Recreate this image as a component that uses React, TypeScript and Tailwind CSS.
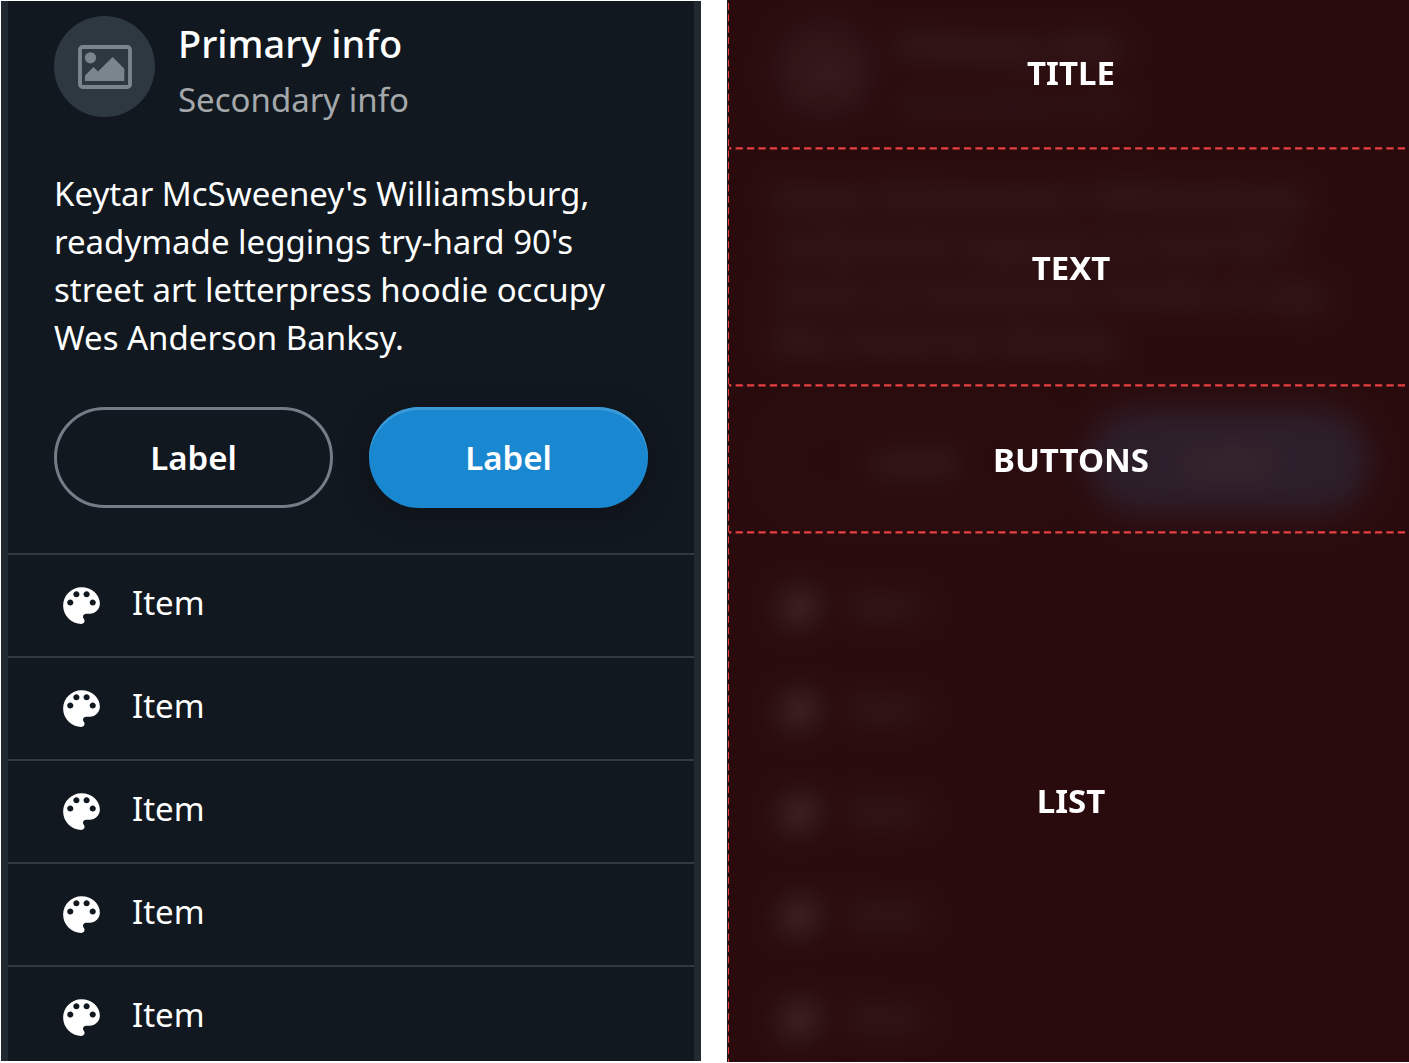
const items = [1, 2, 3, 4, 5];

function PictureIcon() {
  return (
    <svg viewBox="0 0 54 44" className="h-11 w-[54px] text-[#7a858e]" fill="currentColor" aria-hidden="true">
      <rect x="2" y="2" width="50" height="40" rx="2.5" fill="none" stroke="currentColor" strokeWidth="3.8" />
      <circle cx="12.5" cy="12.8" r="5.6" />
      <path d="M7 36V30.5L15.5 22L20 26.5L34.7 12L46.3 23.7V36Z" />
    </svg>
  );
}

function PaletteIcon() {
  return (
    <svg viewBox="0 0 24 24" className="size-[49px] text-white" fill="currentColor" aria-hidden="true">
      <path d="M12 3c-4.97 0-9 4.03-9 9s4.03 9 9 9c.83 0 1.5-.67 1.5-1.5 0-.39-.15-.74-.39-1.01-.23-.26-.38-.61-.38-.99 0-.83.67-1.5 1.5-1.5H16c2.76 0 5-2.24 5-5 0-4.42-4.03-8-9-8zm-5.5 9c-.83 0-1.5-.67-1.5-1.5S5.67 9 6.5 9 8 9.67 8 10.5 7.33 12 6.5 12zm3-4C8.67 8 8 7.33 8 6.5S8.67 5 9.5 5s1.5.67 1.5 1.5S10.33 8 9.5 8zm5 0c-.83 0-1.5-.67-1.5-1.5S13.67 5 14.5 5s1.5.67 1.5 1.5S15.33 8 14.5 8zm3 4c-.83 0-1.5-.67-1.5-1.5S16.67 9 17.5 9s1.5.67 1.5 1.5-.67 1.5-1.5 1.5z" />
    </svg>
  );
}

function CardContent() {
  return (
    <>
      <header className="flex gap-[23px] pt-[15px]">
        <div className="flex size-[101px] shrink-0 items-center justify-center rounded-full bg-[#2e3841]">
          <PictureIcon />
        </div>
        <div className="whitespace-nowrap">
          <h1 className="text-[38px] leading-[54px] font-medium text-white">Primary info</h1>
          <p className="text-[33px] leading-[60px] text-[#a5a8ab]">Secondary info</p>
        </div>
      </header>
      <p className="mt-10 text-[33px] leading-12 whitespace-nowrap text-white">
        Keytar McSweeney's Williamsburg,
        <br />
        readymade leggings try-hard 90's
        <br />
        street art letterpress hoodie occupy
        <br />
        Wes Anderson Banksy.
      </p>
      <div className="mt-[45px] grid grid-cols-2 gap-9">
        <button
          type="button"
          className="h-[101px] rounded-full border-[3px] border-[#737d86] pt-px text-[33px] font-semibold text-white"
        >
          Label
        </button>
        <button
          type="button"
          className="h-[101px] rounded-full bg-[#1a88d0] pt-px text-[33px] font-semibold text-white shadow-[0_6px_24px_4px_#11141a,inset_0_3px_0_#3d9ad9]"
        >
          Label
        </button>
      </div>
    </>
  );
}

function ItemList({ lined }: { lined: boolean }) {
  return (
    <ul className="mt-[45px]">
      {items.map((item) => (
        <li
          key={item}
          className={
            lined
              ? "flex h-[103px] items-center border-t-2 border-[#323940] pl-[49px]"
              : "flex h-[103px] items-center pl-[49px]"
          }
        >
          <PaletteIcon />
          <span className="pb-1.5 pl-[26px] text-[33px] leading-12 text-white">Item</span>
        </li>
      ))}
    </ul>
  );
}

function DashedLine() {
  return (
    <svg className="block h-[3px] w-full" aria-hidden="true">
      <line x1="0" y1="1.3" x2="100%" y2="1.3" stroke="#e74042" strokeWidth="2.3" strokeDasharray="7.2 4.217" strokeDashoffset="4.8" />
    </svg>
  );
}

export default function App() {
  return (
    <main className="grid h-screen grid-cols-[700fr_682fr] gap-[26px] overflow-hidden bg-white pl-px font-['Noto_Sans',sans-serif]">
      <section className="mt-px mb-0.5 min-w-0 overflow-hidden border-x-[7px] border-[#212a31] bg-[#11181f]">
        <div className="px-[46px]">
          <CardContent />
        </div>
        <ItemList lined />
      </section>

      <section className="relative isolate mb-px min-w-0 overflow-hidden bg-[#290b0d]">
        <div className="pt-1 opacity-15 mix-blend-screen blur-[14px]" aria-hidden="true" inert>
          <div className="pr-[41px] pl-[47px]">
            <CardContent />
          </div>
          <ItemList lined={false} />
        </div>
        <div className="absolute inset-0 flex">
          <svg className="h-full w-0.5 shrink-0" aria-hidden="true">
            <rect x="0" y="0" width="1" height="100%" fill="#20191d" />
            <line x1="1.5" y1="3" x2="1.5" y2="1063" stroke="#e93d3f" strokeWidth="1" strokeDasharray="7 4.35" />
          </svg>
          <div className="flex min-w-0 flex-1 flex-col text-[33px] font-bold text-white">
            <h2 className="flex h-[147px] items-center justify-center pb-0.5 pl-1">TITLE</h2>
            <DashedLine />
            <h2 className="flex h-[234px] items-center justify-center pt-0.5 pl-1">TEXT</h2>
            <DashedLine />
            <h2 className="flex h-36 items-center justify-center pt-0.5 pl-1">BUTTONS</h2>
            <DashedLine />
            <h2 className="flex flex-1 items-center justify-center pt-1.5 pl-1">LIST</h2>
          </div>
        </div>
      </section>
    </main>
  );
}
